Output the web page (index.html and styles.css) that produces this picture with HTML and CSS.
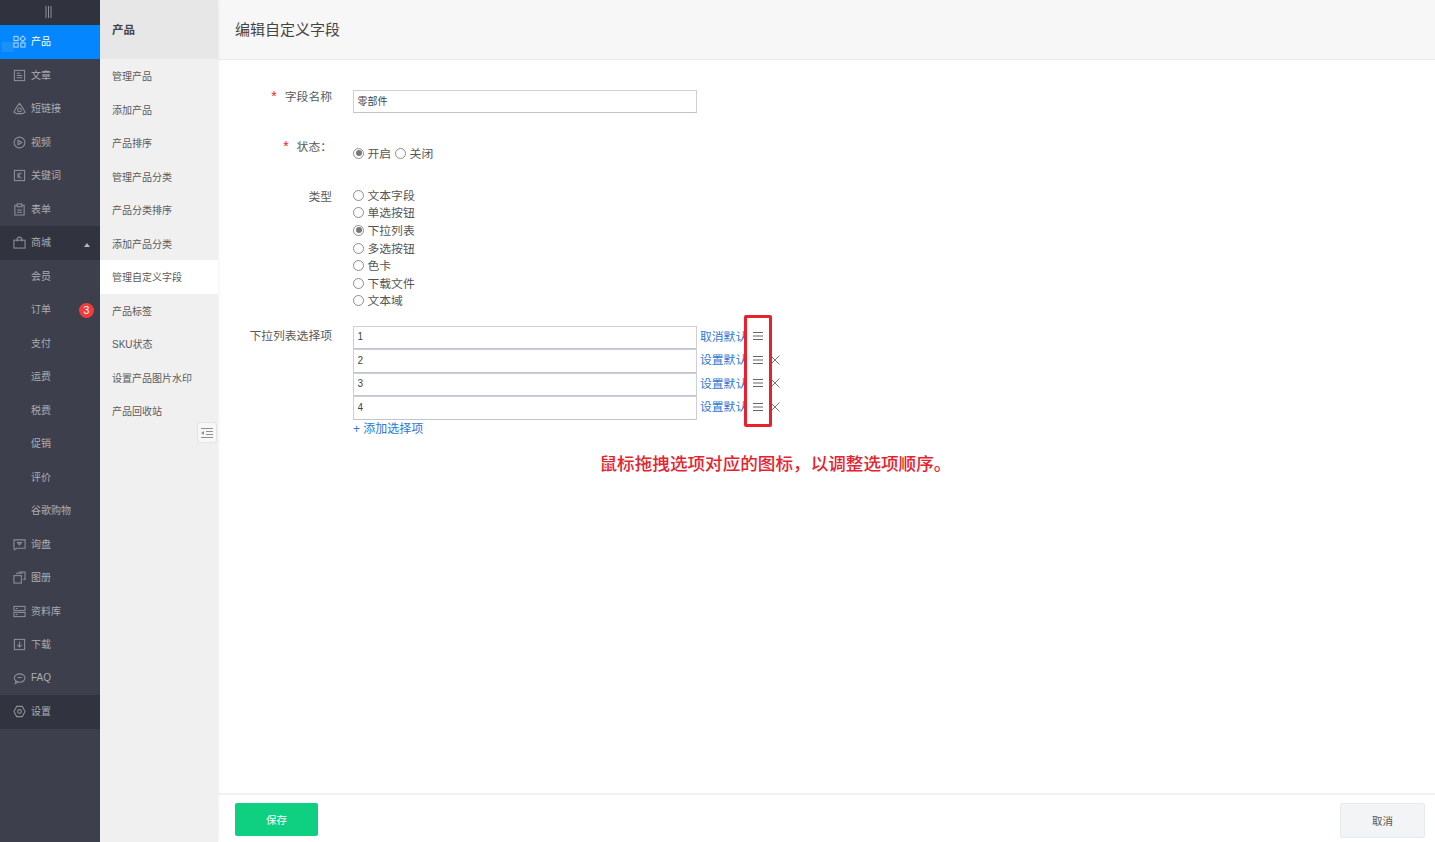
FILE: index.html
```html
<!DOCTYPE html>
<html lang="zh">
<head>
<meta charset="utf-8">
<title>编辑自定义字段</title>
<link rel="stylesheet" href="styles.css">
</head>
<body>
<div class="app">
  <nav class="side">
    <div class="side-top"><svg class="grip" viewBox="0 0 7 12"><path d="M1 0v12M3.500 0v12M6 0v12"/></svg></div>
    <a class="side-item active"><svg class="ico" viewBox="0 0 14 14"><rect x="1" y="1.500" width="4.500" height="4.500"/><path d="M10.500 1l3 3-3 3-3-3z"/><rect x="1" y="8.500" width="4.500" height="4.500"/><rect x="8.500" y="8.500" width="4.500" height="4.500"/></svg><span>产品</span></a>
    <a class="side-item"><svg class="ico" viewBox="0 0 14 14"><rect x="1.500" y="1.500" width="11" height="11"/><path d="M4 4.500h4M4 7h6M4 9.500h6"/></svg><span>文章</span></a>
    <a class="side-item"><svg class="ico" viewBox="0 0 14 14"><path d="M7 1.500l3 4 3 5.500-3 1.500H4L1 11l3-5.500z"/><circle cx="7" cy="8.500" r="2"/></svg><span>短链接</span></a>
    <a class="side-item"><svg class="ico" viewBox="0 0 14 14"><circle cx="7" cy="7" r="5.800"/><path d="M5.500 4.500L9.500 7l-4 2.500z"/></svg><span>视频</span></a>
    <a class="side-item"><svg class="ico" viewBox="0 0 14 14"><rect x="1.500" y="1.500" width="11" height="11"/><path d="M5.500 4v6M9 4L5.500 7 9 10"/></svg><span>关键词</span></a>
    <a class="side-item"><svg class="ico" viewBox="0 0 14 14"><path d="M4.500 2.500H2v10.500h10V2.500H9.500"/><rect x="4.500" y="1" width="5" height="3"/><path d="M4.500 7.500h5M4.500 10h5"/></svg><span>表单</span></a>
    <a class="side-item open"><svg class="ico" viewBox="0 0 14 14"><rect x="1" y="4.500" width="12" height="8.500"/><path d="M4.500 6V2.500L7 1l2.500 1.500V6"/></svg><span>商城</span><i class="caret"></i></a>
    <a class="side-item"><span class="sub">会员</span></a>
    <a class="side-item"><span class="sub">订单</span><b class="badge">3</b></a>
    <a class="side-item"><span class="sub">支付</span></a>
    <a class="side-item"><span class="sub">运费</span></a>
    <a class="side-item"><span class="sub">税费</span></a>
    <a class="side-item"><span class="sub">促销</span></a>
    <a class="side-item"><span class="sub">评价</span></a>
    <a class="side-item"><span class="sub">谷歌购物</span></a>
    <a class="side-item"><svg class="ico" viewBox="0 0 14 14"><path d="M1 2h12v9H4l-2.500 1.500L1 11z"/><path d="M5 5h4L7 7.500z"/></svg><span>询盘</span></a>
    <a class="side-item"><svg class="ico" viewBox="0 0 14 14"><rect x="1" y="5" width="8" height="8"/><path d="M4 3.500V2.500h6.500M6 1h7v8h-2"/></svg><span>图册</span></a>
    <a class="side-item"><svg class="ico" viewBox="0 0 14 14"><rect x="1" y="1.500" width="12" height="4.500"/><rect x="1" y="8" width="12" height="4.500"/><path d="M3 3.700h2M3 10.200h2"/></svg><span>资料库</span></a>
    <a class="side-item"><svg class="ico" viewBox="0 0 14 14"><rect x="1.500" y="1.500" width="11" height="11"/><path d="M7 4v5.500M4.800 7.500L7 9.700l2.200-2.200"/></svg><span>下载</span></a>
    <a class="side-item"><svg class="ico" viewBox="0 0 14 14"><ellipse cx="7.200" cy="6.500" rx="5.800" ry="4.500"/><path d="M3 10l-.5 2.500L5.500 11M5 6h4.500"/></svg><span>FAQ</span></a>
    <a class="side-item open"><svg class="ico" viewBox="0 0 14 14"><path d="M4 1.500h6L13 7l-3 5.500H4L1 7z"/><circle cx="7" cy="7" r="2"/></svg><span>设置</span></a>
  </nav>

  <aside class="subnav">
    <div class="subnav-head">产品</div>
    <a class="subnav-item">管理产品</a>
    <a class="subnav-item">添加产品</a>
    <a class="subnav-item">产品排序</a>
    <a class="subnav-item">管理产品分类</a>
    <a class="subnav-item">产品分类排序</a>
    <a class="subnav-item">添加产品分类</a>
    <a class="subnav-item current">管理自定义字段</a>
    <a class="subnav-item">产品标签</a>
    <a class="subnav-item">SKU状态</a>
    <a class="subnav-item">设置产品图片水印</a>
    <a class="subnav-item">产品回收站</a>
    <button class="collapse" type="button" aria-label="收起"><svg viewBox="0 0 12 10"><path d="M0 .5h12M5 3.500h7M5 6.500h7M0 9.500h12"/><path class="fill" d="M3 3v4L0 5z"/></svg></button>
  </aside>

  <main class="main">
    <header class="main-head">编辑自定义字段</header>
    <form class="form">
      <div class="row">
        <div class="label"><em>*</em>字段名称</div>
        <input class="text name" type="text" value="零部件">
      </div>
      <div class="row row-state">
        <div class="label"><em>*</em>状态：</div>
        <div class="inline-radios">
          <label class="radio"><i class="dot on"></i>开启</label>
          <label class="radio"><i class="dot"></i>关闭</label>
        </div>
      </div>
      <div class="row row-type">
        <div class="label">类型</div>
        <div class="stack">
          <label class="radio"><i class="dot"></i>文本字段</label>
          <label class="radio"><i class="dot"></i>单选按钮</label>
          <label class="radio"><i class="dot on"></i>下拉列表</label>
          <label class="radio"><i class="dot"></i>多选按钮</label>
          <label class="radio"><i class="dot"></i>色卡</label>
          <label class="radio"><i class="dot"></i>下载文件</label>
          <label class="radio"><i class="dot"></i>文本域</label>
        </div>
      </div>
      <div class="row row-options">
        <div class="label">下拉列表选择项</div>
        <div class="options">
          <div class="opt"><input class="text" type="text" value="1"><a class="opt-link">取消默认</a><svg class="handle" viewBox="0 0 10 8"><path d="M0 .5h10M0 4h10M0 7.500h10"/></svg></div>
          <div class="opt"><input class="text" type="text" value="2"><a class="opt-link">设置默认</a><svg class="handle" viewBox="0 0 10 8"><path d="M0 .5h10M0 4h10M0 7.500h10"/></svg><svg class="close" viewBox="0 0 10 10"><path d="M.5 .5l9 9M9.500 .5l-9 9"/></svg></div>
          <div class="opt"><input class="text" type="text" value="3"><a class="opt-link">设置默认</a><svg class="handle" viewBox="0 0 10 8"><path d="M0 .5h10M0 4h10M0 7.500h10"/></svg><svg class="close" viewBox="0 0 10 10"><path d="M.5 .5l9 9M9.500 .5l-9 9"/></svg></div>
          <div class="opt"><input class="text" type="text" value="4"><a class="opt-link">设置默认</a><svg class="handle" viewBox="0 0 10 8"><path d="M0 .5h10M0 4h10M0 7.500h10"/></svg><svg class="close" viewBox="0 0 10 10"><path d="M.5 .5l9 9M9.500 .5l-9 9"/></svg></div>
          <a class="add">+ 添加选择项</a>
          <div class="mark"></div>
        </div>
      </div>
      <p class="note">鼠标拖拽选项对应的图标，以调整选项顺序。</p>
    </form>
    <footer class="foot">
      <button class="btn save" type="button">保存</button>
      <button class="btn cancel" type="button">取消</button>
    </footer>
  </main>
</div>
</body>
</html>
```
FILE: styles.css
```css
* { box-sizing: border-box; }
html, body { margin: 0; height: 100%; overflow: hidden; }
body { font-family: "Liberation Sans", "Noto Sans CJK SC", sans-serif; background: #fff; color: #555; }
.app { display: flex; width: 1435px; height: 842px; }

.side { position: relative; width: 100px; flex: none; background: #3d404c; font-size: 10px; color: #abadb3; }
.side-top { height: 25px; background: #30333d; display: flex; align-items: center; justify-content: center; }
.grip { width: 7px; height: 12px; margin: 0 0 2px -3px; fill: none; stroke: #8e9098; stroke-width: 1; }
.side-item { position: relative; display: flex; align-items: center; height: 33.500px; padding-left: 12.500px; }
.side-item.active { background: #0486fe; color: #fff; }
.side-item.active::before { content: ""; position: absolute; left: 2px; top: 17px; width: 12px; height: 10px; background: #1a90fb; }
.side-item.open { background: #31343f; }
.ico { position: relative; width: 13px; height: 13px; margin-right: 5.500px; fill: none; stroke: #8d8f97; stroke-width: 1.150; }
.active .ico { stroke: #a8d5ff; }
.side-item span { position: relative; margin-bottom: 2px; }
.side-item .sub { margin-left: 18.500px; }
.caret { position: absolute; left: 84px; top: 17px; width: 0; height: 0; border: 3.500px solid transparent; border-top: 0; border-bottom: 4px solid #b5b6bb; }
.badge { position: absolute; left: 79px; top: 10px; width: 15px; height: 15px; border-radius: 50%; background: #f23c3c; color: #fff; font-size: 10.500px; font-weight: 400; line-height: 15px; text-align: center; }

.subnav { position: relative; z-index: 1; width: 118px; flex: none; background: #f0f0f1; font-size: 10px; color: #5a5a5a; box-shadow: 1px 0 3px rgba(0,0,0,.05); }
.subnav-head { height: 59px; background: #e8e7e8; padding-left: 12px; font-size: 11.500px; font-weight: 700; line-height: 60px; color: #444; }
.subnav-item { display: block; height: 33.500px; padding-left: 12px; line-height: 36px; }
.subnav-item.current { background: #fff; }
.collapse { position: absolute; left: 97px; top: 422px; width: 20px; height: 21px; padding: 0; display: flex; align-items: center; justify-content: center; background: #f7f7f7; border: 1px solid #e4e4e4; border-radius: 3px; }
.collapse svg { width: 12px; height: 10px; fill: none; stroke: #909090; }
.collapse .fill { fill: #909090; stroke: none; }

.main { flex: 1; min-width: 0; display: flex; flex-direction: column; position: relative; }
.main-head { height: 60px; padding-left: 17px; background: #f7f7f7; border-bottom: 1px solid #ececec; font-size: 15px; line-height: 59px; color: #444; }

.form { flex: 1; padding-top: 30px; font-size: 11.800px; }
.row { display: flex; }
.label { position: relative; width: 114px; margin-right: 21px; text-align: right; line-height: 14px; color: #595959; white-space: nowrap; }
.label em { font-style: normal; font-size: 14px; line-height: 0; color: #f01c1c; margin-right: 8px; }
.row-state { margin-top: 27px; }
.row-type { margin-top: 25.500px; }
.row-type .label { padding-top: 4px; }
.row-options { margin-top: 17.100px; }
.row-options .label { padding-top: 3px; }

.text { display: block; width: 344px; height: 23.500px; padding: 0 3.500px 2px; border: 1px solid #cfcfdb; border-bottom-color: #c4c4d0; background: #fff; font: 10px "Liberation Sans", "Noto Sans CJK SC", sans-serif; color: #444; outline: 0; }
.text.name { height: 23px; }
.inline-radios { display: flex; gap: 4px; padding-top: 4px; }
.stack { display: flex; flex-direction: column; }
.radio { display: flex; align-items: center; height: 17.600px; color: #555; white-space: nowrap; }
.inline-radios .radio { height: 16px; }
.dot { position: relative; width: 11px; height: 11px; margin: 2px 3.500px 0 0; border: 1px solid #8d8d8d; border-radius: 50%; background: #fff; }
.dot.on::after { content: ""; position: absolute; inset: 1.500px; border-radius: 50%; background: #777; }

.options { position: relative; }
.opt { display: flex; align-items: center; height: 23.500px; }
.opt-link { width: 44px; margin: 0 0 5px 3px; white-space: nowrap; color: #2b78d6; }
.handle { width: 10px; height: 8px; margin: 0 0 3px 9px; fill: none; stroke: #666; stroke-width: 1; }
.close { width: 10px; height: 10px; margin: 0 0 3px 7px; fill: none; stroke: #777; stroke-width: 1; }
.add { display: block; height: 16px; font-size: 12px; line-height: 18px; color: #2b78d6; }
.mark { position: absolute; left: 391px; top: -11px; width: 28px; height: 112px; border: 3px solid #e9212e; border-radius: 2px; }
.note { margin: 18px 0 0 381.500px; font-size: 17.600px; font-weight: 500; line-height: 20px; color: #e8212e; white-space: nowrap; }

.foot { height: 49px; padding: 8px 10px 0 17px; display: flex; justify-content: space-between; align-items: flex-start; border-top: 2px solid #f1f1f1; }
.btn { font: 10.500px "Liberation Sans", "Noto Sans CJK SC", sans-serif; border-radius: 2px; }
.save { width: 83px; height: 33px; border: 0; background: #0fcf80; color: #fff; }
.cancel { width: 85px; height: 35px; border: 1px solid #e8eaec; background: #f2f4f6; color: #555; }
```
